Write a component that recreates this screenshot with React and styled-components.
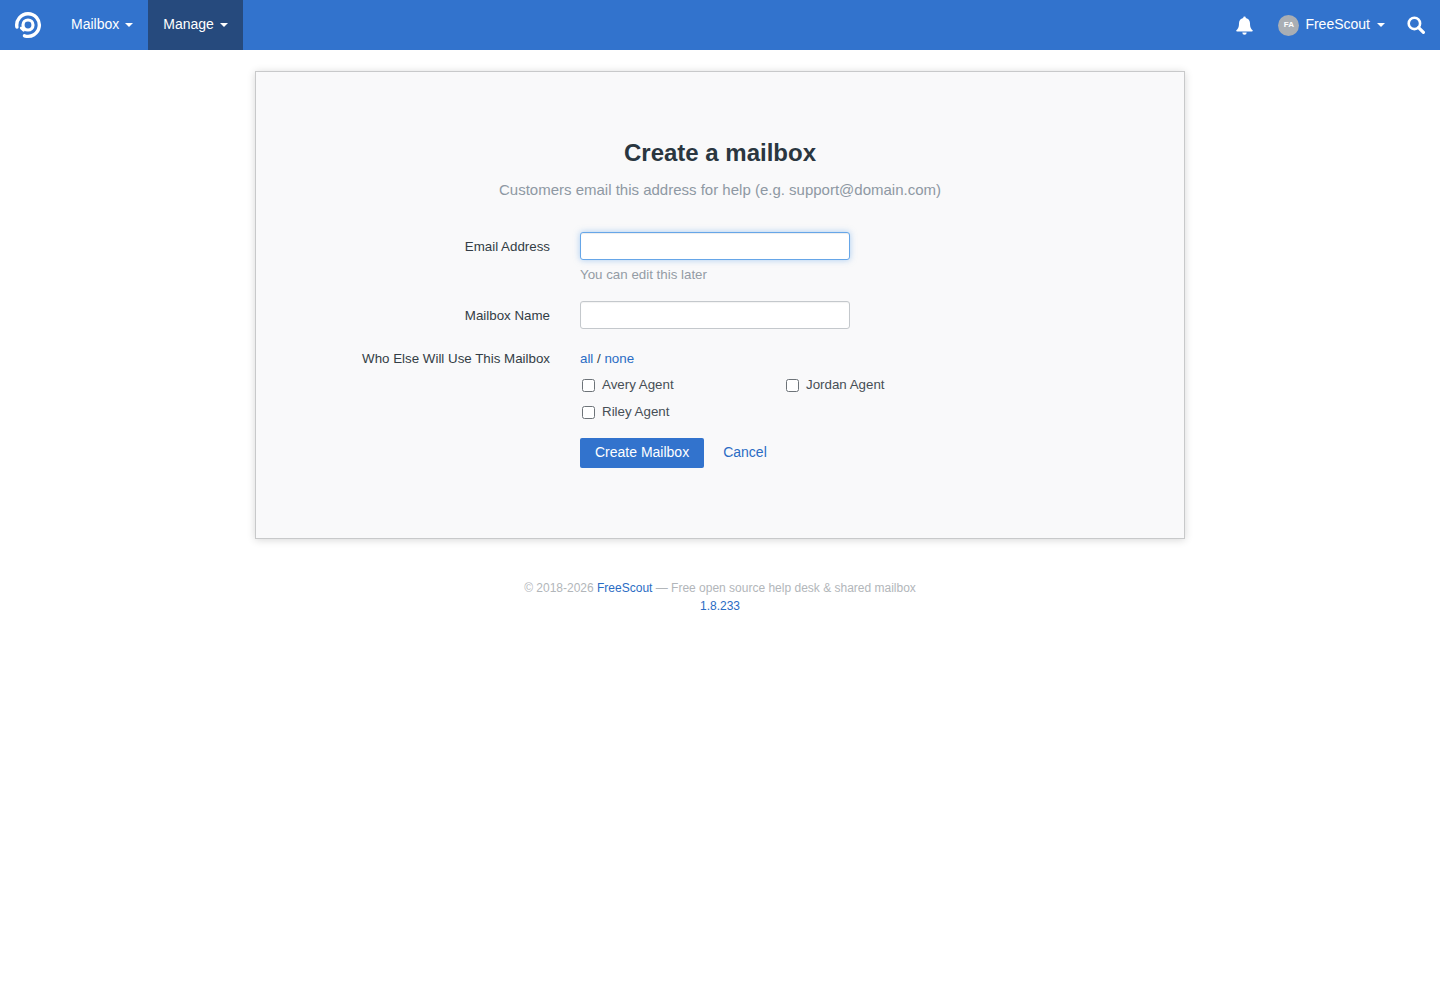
import React from "react";
import styled, { createGlobalStyle } from "styled-components";

const GlobalStyle = createGlobalStyle`
  html, body {
    margin: 0;
    background: #fff;
    font-family: "Liberation Sans", Arial, sans-serif;
    font-size: 13.33px;
    line-height: 1.42857;
    color: #333d45;
  }
  * {
    box-sizing: border-box;
  }
  a {
    color: #2a6cc4;
    text-decoration: none;
  }
`;

const Navbar = styled.nav`
  display: flex;
  justify-content: space-between;
  height: 50px;
  background: #3273cd;
  color: #fff;
`;

const NavGroup = styled.div`
  display: flex;
  align-items: center;
`;

const Brand = styled.a`
  display: flex;
  align-items: center;
  width: 56px;
  height: 50px;
  padding-left: 14px;
`;

const NavItem = styled.a`
  display: flex;
  align-items: center;
  height: 50px;
  padding: 0 15px;
  color: #fff;
  font-size: 14px;
  background: ${(p) => (p.$active ? "#264a7d" : "transparent")};
`;

const Caret = styled.span`
  width: 0;
  height: 0;
  margin-left: ${(p) => p.$gap || 6}px;
  border-top: 4px solid #fff;
  border-left: 4px solid transparent;
  border-right: 4px solid transparent;
`;

const BellLink = styled.a`
  display: flex;
  align-items: center;
  padding: 0 21px 0 15px;
  color: #fff;
`;

const UserLink = styled.a`
  display: flex;
  align-items: center;
  padding: 0 22px 0 4px;
  color: #fff;
  font-size: 14px;
`;

const Avatar = styled.span`
  display: flex;
  align-items: center;
  justify-content: center;
  width: 21px;
  height: 21px;
  margin-right: 6px;
  border-radius: 50%;
  background: #a9aeb4;
  color: #fff;
  font-size: 8px;
  font-weight: 700;
`;

const SearchLink = styled.a`
  display: flex;
  align-items: center;
  padding-right: 15px;
  color: #fff;
`;

const Card = styled.main`
  width: 930px;
  height: 468px;
  margin: 21px auto 0;
  padding-top: 64px;
  background: #f9f9fa;
  border: 1px solid #c8c9ca;
  box-shadow: 0 1px 8px rgba(0, 0, 0, 0.16);
`;

const Title = styled.h1`
  margin: 0;
  font-size: 24px;
  line-height: 33px;
  font-weight: 700;
  text-align: center;
  color: #2a3640;
`;

const Subtitle = styled.p`
  margin: 11px 0 32px;
  font-size: 15px;
  line-height: 20px;
  text-align: center;
  color: #8e98a3;
`;

const Row = styled.div`
  display: grid;
  grid-template-columns: 294px 1fr;
  column-gap: 30px;
  margin-bottom: ${(p) => p.$gap || 0}px;
`;

const Label = styled.label`
  padding-top: ${(p) => (p.$field ? 1 : 0)}px;
  text-align: right;
  line-height: 28px;
  white-space: nowrap;
`;

const TextInput = styled.input`
  display: block;
  width: 270px;
  height: 28px;
  padding: 0 8px;
  background: #fff;
  border: 1px solid ${(p) => (p.$focused ? "#66a6e8" : "#c4c8cc")};
  border-radius: 3px;
  outline: none;
  box-shadow: ${(p) =>
    p.$focused
      ? "inset 0 1px 1px rgba(0,0,0,.075), 0 0 6px rgba(102,166,232,.55)"
      : "inset 0 1px 1px rgba(0,0,0,.05)"};
`;

const Hint = styled.div`
  margin-top: 5px;
  line-height: 20px;
  color: #949ca5;
`;

const Links = styled.div`
  padding-top: 4px;
  line-height: 20px;
`;

const AgentGrid = styled.div`
  display: grid;
  grid-template-columns: 204px 204px;
  grid-auto-rows: 27px;
  margin-top: 2px;
`;

const AgentLabel = styled.label`
  display: flex;
  align-items: center;
  padding-left: 2px;
  color: #474f56;
`;

const Check = styled.input.attrs({ type: "checkbox" })`
  appearance: none;
  width: 13px;
  height: 13px;
  margin: 1px 7px 0 0;
  background: #fff;
  border: 1px solid #6d7378;
  border-radius: 2.5px;
`;

const Actions = styled.div`
  display: flex;
  align-items: center;
  gap: 19px;
  margin-top: 13px;
`;

const PrimaryButton = styled.button`
  height: 30px;
  padding: 0 15px 2px;
  background: #3273cd;
  border: 0;
  border-radius: 2px;
  color: #fff;
  font: 14px "Liberation Sans", Arial, sans-serif;
`;

const CancelLink = styled.a`
  font-size: 14px;
`;

const Footer = styled.footer`
  margin-top: 40px;
  text-align: center;
  font-size: 12px;
  line-height: 18px;
  color: #b2b6ba;
`;

const Logo = () => (
  <svg width="28" height="28" viewBox="0 0 28 28" fill="none" stroke="#fff" strokeLinecap="round">
    <path d="M10.5 24.8A11.3 11.3 0 1 0 2.9 16" strokeWidth="3.4" />
    <circle cx="14" cy="14" r="5" strokeWidth="3.2" />
    <path d="M9.6 19.4 7.2 17" strokeWidth="2.6" />
  </svg>
);

const BellIcon = () => (
  <svg width="17" height="19" viewBox="0 0 17 19" fill="#fff">
    <path d="M8.5.5a1.3 1.3 0 0 1 1.3 1.4C12.4 2.4 14 4.5 14 7.2c0 4.3 1.1 5.4 2.6 7.1.4.5.1 1.2-.6 1.2H1c-.7 0-1-.7-.6-1.2C1.9 12.6 3 11.5 3 7.2c0-2.7 1.6-4.8 4.2-5.3A1.3 1.3 0 0 1 8.5.5Z" />
    <path d="M6.3 16.500h4.400a2.200 2.200 0 0 1-4.400 0Z" />
  </svg>
);

const SearchIcon = () => (
  <svg width="18" height="18" viewBox="0 0 18 18" fill="none" stroke="#fff">
    <circle cx="7.4" cy="7.4" r="5.7" strokeWidth="2.6" />
    <path d="M11.6 11.6 16.4 16.4" strokeWidth="3.2" strokeLinecap="round" />
  </svg>
);

export default function App() {
  return (
    <>
      <GlobalStyle />
      <Navbar>
        <NavGroup>
          <Brand href="#">
            <Logo />
          </Brand>
          <NavItem href="#">
            Mailbox
            <Caret />
          </NavItem>
          <NavItem href="#" $active>
            Manage
            <Caret />
          </NavItem>
        </NavGroup>
        <NavGroup>
          <BellLink href="#">
            <BellIcon />
          </BellLink>
          <UserLink href="#">
            <Avatar>FA</Avatar>
            FreeScout
            <Caret $gap={7} />
          </UserLink>
          <SearchLink href="#">
            <SearchIcon />
          </SearchLink>
        </NavGroup>
      </Navbar>
      <Card>
        <Title>Create a mailbox</Title>
        <Subtitle>Customers email this address for help (e.g. support@domain.com)</Subtitle>
        <Row $gap={16}>
          <Label $field>Email Address</Label>
          <div>
            <TextInput $focused />
            <Hint>You can edit this later</Hint>
          </div>
        </Row>
        <Row $gap={15}>
          <Label $field>Mailbox Name</Label>
          <TextInput />
        </Row>
        <Row>
          <Label>Who Else Will Use This Mailbox</Label>
          <div>
            <Links>
              <a href="#">all</a> / <a href="#">none</a>
            </Links>
            <AgentGrid>
              <AgentLabel>
                <Check />
                Avery Agent
              </AgentLabel>
              <AgentLabel>
                <Check />
                Jordan Agent
              </AgentLabel>
              <AgentLabel>
                <Check />
                Riley Agent
              </AgentLabel>
            </AgentGrid>
            <Actions>
              <PrimaryButton>Create Mailbox</PrimaryButton>
              <CancelLink href="#">Cancel</CancelLink>
            </Actions>
          </div>
        </Row>
      </Card>
      <Footer>
        © 2018-2026 <a href="#">FreeScout</a> — Free open source help desk &amp; shared mailbox
        <br />
        <a href="#">1.8.233</a>
      </Footer>
    </>
  );
}
